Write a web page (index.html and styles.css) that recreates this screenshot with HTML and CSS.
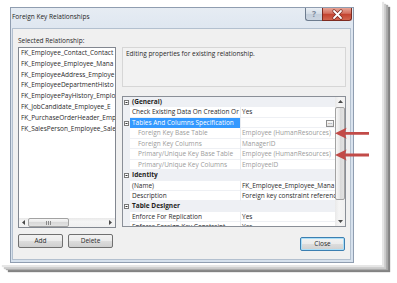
FILE: index.html
```html
<!DOCTYPE html>
<html>
<head>
<meta charset="utf-8">
<link rel="stylesheet" href="styles.css">
</head>
<body>
<div class="card">
  <div class="dialog">
    <div class="titlebar">
      <span class="title">Foreign Key Relationships</span>
      <div class="caps">
        <div class="cap help">?</div>
        <div class="cap close">
          <svg width="30" height="13" viewBox="0 0 30 13"><path d="M12 3L19 10M19 3L12 10" stroke="#7a2a20" stroke-width="3.2" stroke-linecap="round"/><path d="M12 3L19 10M19 3L12 10" stroke="#fff" stroke-width="1.8" stroke-linecap="round"/></svg>
        </div>
      </div>
    </div>
    <div class="client">
      <div class="label">Selected Relationship:</div>
      <div class="main">
        <div class="listbox">
          <div class="items">
            <div class="item">FK_Employee_Contact_Contact</div>
            <div class="item">FK_Employee_Employee_Mana</div>
            <div class="item">FK_EmployeeAddress_Employe</div>
            <div class="item">FK_EmployeeDepartmentHisto</div>
            <div class="item">FK_EmployeePayHistory_Emplo</div>
            <div class="item">FK_JobCandidate_Employee_E</div>
            <div class="item">FK_PurchaseOrderHeader_Emp</div>
            <div class="item">FK_SalesPerson_Employee_Sale</div>
          </div>
          <div class="hscroll">
            <div class="sbtn"><svg width="3" height="5" viewBox="0 0 3 5"><path d="M3 0L0 2.5L3 5z" fill="#4a4a4a"/></svg></div>
            <div class="hthumb"><svg width="5" height="4" viewBox="0 0 5 4"><path d="M0.5 0v4M2.5 0v4M4.5 0v4" stroke="#8a8a8a" stroke-width="1"/></svg></div>
            <div class="hspace"></div>
            <div class="sbtn"><svg width="3" height="5" viewBox="0 0 3 5"><path d="M0 0L3 2.5L0 5z" fill="#4a4a4a"/></svg></div>
          </div>
        </div>
        <div class="rightcol">
          <div class="desc">Editing properties for existing relationship.</div>
          <div class="pgrid">
            <div class="rows">
              <div class="row"><div class="g"><svg width="5" height="5" viewBox="0 0 5 5"><rect x="0.5" y="0.5" width="4" height="4" fill="#fff" stroke="#7a7a7a"/><path d="M1.5 2.5h2" stroke="#333"/></svg></div><div class="c">(General)</div></div>
              <div class="row"><div class="g"></div><div class="n">Check Existing Data On Creation Or</div><div class="v">Yes</div></div>
              <div class="row"><div class="g"><svg width="5" height="5" viewBox="0 0 5 5"><rect x="0.5" y="0.5" width="4" height="4" fill="#fff" stroke="#7a7a7a"/><path d="M1.5 2.5h2" stroke="#333"/></svg></div><div class="n sel">Tables And Columns Specification</div><div class="v vflex"><span class="ell">...</span></div></div>
              <div class="row sub"><div class="g"></div><div class="n">Foreign Key Base Table</div><div class="v">Employee (HumanResources)</div></div>
              <div class="row sub"><div class="g"></div><div class="n">Foreign Key Columns</div><div class="v">ManagerID</div></div>
              <div class="row sub"><div class="g"></div><div class="n">Primary/Unique Key Base Table</div><div class="v">Employee (HumanResources)</div></div>
              <div class="row sub"><div class="g"></div><div class="n">Primary/Unique Key Columns</div><div class="v">EmployeeID</div></div>
              <div class="row"><div class="g"><svg width="5" height="5" viewBox="0 0 5 5"><rect x="0.5" y="0.5" width="4" height="4" fill="#fff" stroke="#7a7a7a"/><path d="M1.5 2.5h2" stroke="#333"/></svg></div><div class="c">Identity</div></div>
              <div class="row"><div class="g"></div><div class="n">(Name)</div><div class="v">FK_Employee_Employee_Mana</div></div>
              <div class="row"><div class="g"></div><div class="n">Description</div><div class="v">Foreign key constraint referenc</div></div>
              <div class="row"><div class="g"><svg width="5" height="5" viewBox="0 0 5 5"><rect x="0.5" y="0.5" width="4" height="4" fill="#fff" stroke="#7a7a7a"/><path d="M1.5 2.5h2" stroke="#333"/></svg></div><div class="c">Table Designer</div></div>
              <div class="row"><div class="g"></div><div class="n">Enforce For Replication</div><div class="v">Yes</div></div>
              <div class="row"><div class="g"></div><div class="n">Enforce Foreign Key Constraint</div><div class="v">Yes</div></div>
            </div>
            <div class="vscroll">
              <div class="vbtn"><svg width="5" height="3" viewBox="0 0 5 3"><path d="M0 3L2.5 0L5 3z" fill="#4a4a4a"/></svg></div>
              <div class="vthumb"></div>
              <div class="vspace"></div>
              <div class="vbtn"><svg width="5" height="3" viewBox="0 0 5 3"><path d="M0 0L2.5 3L5 0z" fill="#4a4a4a"/></svg></div>
            </div>
          </div>
        </div>
      </div>
      <div class="buttons">
        <button class="btn">Add</button>
        <button class="btn">Delete</button>
        <button class="btn def">Close</button>
      </div>
    </div>
  </div>
  <svg class="arrows" width="38" height="36" viewBox="0 0 38 36">
    <path d="M1 7.3L12.5 1.8L11 5.9L35 5.9L35 8.7L11 8.7L12.5 12.8Z" fill="#c24b48"/>
    <path d="M1 29L12.5 23.5L11 27.6L35 27.6L35 30.4L11 30.4L12.5 34.5Z" fill="#c24b48"/>
  </svg>
</div>
</body>
</html>
```

FILE: styles.css
```css
* { box-sizing: border-box; }
html, body { margin: 0; padding: 0; background: #fff; }
body {
  width: 397px; height: 283px; overflow: hidden;
  font-family: "Open Sans", "Noto Sans", sans-serif;
  font-size: 6.5px; color: #2a2a2a;
}
.card {
  position: relative;
  width: 382px; height: 265px;
  padding: 7px 0 0 10px;
  background: #fff;
  box-shadow: 2px 2px 1px #e6e6e6, 4px 4px 1px #cacaca, 6px 5px 1px #a8a8a8, 8px 7px 1px #828282;
}
.dialog {
  width: 344px; height: 256px;
  border: 1px solid #8f9db0;
  background: linear-gradient(#e6ecf3, #dbe4ef 30px, #d6e1ed);
  display: flex; flex-direction: column;
}
.titlebar { height: 20px; flex: none; display: flex; align-items: flex-start; }
.title { padding-left: 1px; line-height: 18px; color: #1e1e1e; }
.caps { margin-left: auto; margin-right: 1px; display: flex; }
.cap { height: 13px; border: 1px solid #6d7c8f; border-top: none; }
.help {
  width: 17px; border-right: none; border-radius: 0 0 0 3px;
  background: linear-gradient(#eaeff5, #d3dce6 50%, #c3cedb 50%, #cbd5e1);
  text-align: center; line-height: 12px; font-size: 8.5px; font-weight: bold; color: #7a889a;
}
.close {
  width: 30px; border-color: #7d2b21; border-radius: 0 0 3px 0;
  background: linear-gradient(#e8a597, #d46f5e 45%, #c2412e 50%, #d2654f);
}
.close svg { display: block; margin-left: -1px; }
.client {
  flex: 1; margin: 0 2px 2px 1px;
  border: 1px solid #b3c0cf; background: #f0f0f0;
  padding: 6px 4px 0 5px;
  display: flex; flex-direction: column;
}
.label { height: 11px; line-height: 11px; margin-bottom: 1px; }
.main { display: flex; gap: 6px; height: 181px; flex: none; }
.listbox {
  width: 98px; height: 181px; border: 1px solid #828790; background: #fff;
  display: flex; flex-direction: column;
}
.items { flex: 1; overflow: hidden; }
.item { height: 10.8px; line-height: 10.8px; padding-left: 2px; white-space: nowrap; overflow: hidden; }
.hscroll { height: 9px; flex: none; display: flex; background: linear-gradient(#e9e9e9, #f5f5f5 40%, #f0f0f0); }
.sbtn { width: 9px; display: flex; align-items: center; justify-content: center; }
.sbtn svg, .vbtn svg, .hthumb svg, .g svg { display: block; }
.hthumb {
  width: 41px; border: 1px solid #a2a2a2; border-radius: 2px;
  background: linear-gradient(#f7f7f7, #e6e6e6 50%, #d9d9d9 50%, #e2e2e2);
  display: flex; align-items: center; justify-content: center;
}
.hspace { flex: 1; }
.rightcol { width: 224px; display: flex; flex-direction: column; gap: 9px; }
.desc { height: 40px; border: 1px solid #d6d6d6; background: #f2f2f2; padding: 1px 3px; line-height: 10.5px; }
.pgrid { height: 131px; border: 1px solid #8a8f97; background: #fff; display: flex; }
.rows { flex: 1; overflow: hidden; }
.row { display: flex; height: 10.45px; line-height: 10.45px; white-space: nowrap; }
.g { width: 7px; flex: none; background: #eef0f4; display: flex; align-items: center; justify-content: center; }
.n {
  width: 111px; flex: none; padding-left: 2px; overflow: hidden;
  border-right: 1px solid #e9ecf1; box-shadow: inset 0 -1px #eef0f4;
}
.v { flex: 1; min-width: 0; padding-left: 1px; overflow: hidden; box-shadow: inset 0 -1px #eef0f4; }
.vflex { display: flex; align-items: center; }
.c { flex: 1; background: #eef0f4; font-weight: bold; padding-left: 2px; color: #1e1e1e; }
.sub .n { padding-left: 8px; color: #9b9b9b; }
.sub .v { color: #9b9b9b; }
.n.sel { background: #3399ff; color: #fff; box-shadow: none; }
.ell {
  margin-left: auto; margin-right: 1px; width: 8px; height: 7px;
  border: 1px solid #8e8e8e; background: linear-gradient(#fbfbfb, #e0e0e0);
  font-size: 5px; line-height: 3px; text-align: center; color: #333;
}
.vscroll { width: 10px; flex: none; display: flex; flex-direction: column; background: linear-gradient(90deg, #e9e9e9, #f5f5f5 40%, #f0f0f0); }
.vbtn { height: 9px; display: flex; align-items: center; justify-content: center; }
.vthumb {
  height: 93px; margin-top: 1px; border: 1px solid #a2a2a2; border-radius: 2px;
  background: linear-gradient(90deg, #f7f7f7, #e6e6e6 50%, #d9d9d9 50%, #e2e2e2);
}
.vspace { flex: 1; }
.buttons { display: flex; gap: 5px; margin-top: 6px; align-items: flex-start; }
.btn {
  width: 45px; height: 14px; padding: 0;
  border: 1px solid #707070; border-radius: 2px;
  background: linear-gradient(#f2f2f2, #ebebeb 50%, #dddddd 50%, #cfcfcf);
  font: inherit; color: #2a2a2a; line-height: 12px;
}
.btn.def {
  margin-left: auto; margin-top: 3px; margin-right: 1px;
  border-color: #3c7fb1; box-shadow: inset 0 0 0 1px #a9def8;
}
.arrows { position: absolute; left: 334px; top: 126px; }
```
